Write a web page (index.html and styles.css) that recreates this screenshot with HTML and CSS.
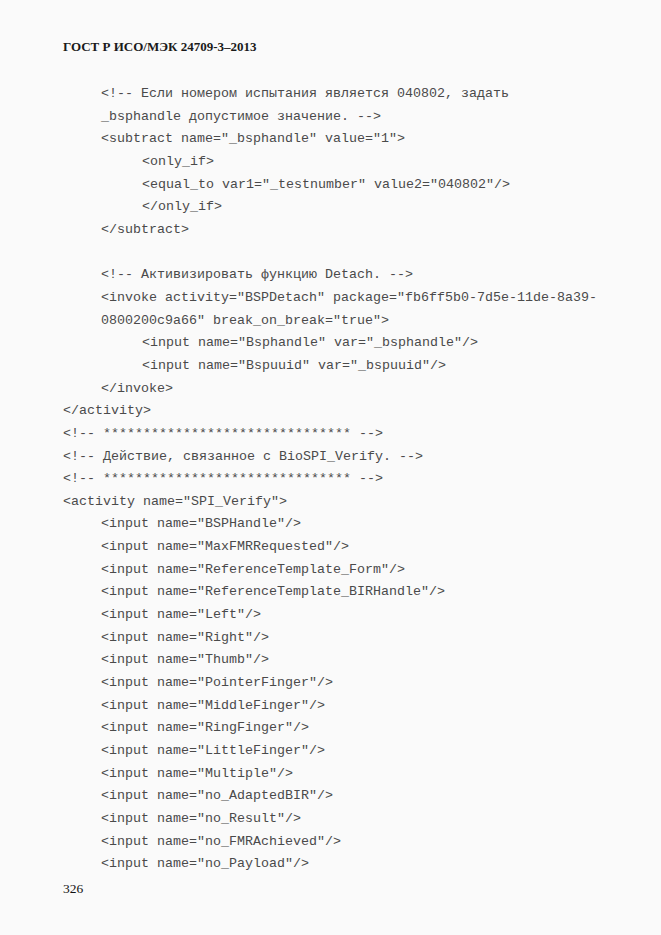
FILE: index.html
```html
<!DOCTYPE html>
<html lang="ru">
<head>
<meta charset="utf-8">
<title>ГОСТ Р ИСО/МЭК 24709-3–2013</title>
<link rel="stylesheet" href="styles.css">
</head>
<body>
<div class="page">
  <div class="header">ГОСТ Р ИСО/МЭК 24709-3–2013</div>
  <div class="code">
    <div class="l1">&lt;!-- Если номером испытания является 040802, задать</div>
    <div class="l1">_bsphandle допустимое значение. --&gt;</div>
    <div class="l1">&lt;subtract name="_bsphandle" value="1"&gt;</div>
    <div class="l2">&lt;only_if&gt;</div>
    <div class="l2">&lt;equal_to var1="_testnumber" value2="040802"/&gt;</div>
    <div class="l2">&lt;/only_if&gt;</div>
    <div class="l1">&lt;/subtract&gt;</div>
    <div class="blank">&nbsp;</div>
    <div class="l1">&lt;!-- Активизировать функцию Detach. --&gt;</div>
    <div class="l1">&lt;invoke activity="BSPDetach" package="fb6ff5b0-7d5e-11de-8a39-</div>
    <div class="l1">0800200c9a66" break_on_break="true"&gt;</div>
    <div class="l2">&lt;input name="Bsphandle" var="_bsphandle"/&gt;</div>
    <div class="l2">&lt;input name="Bspuuid" var="_bspuuid"/&gt;</div>
    <div class="l1">&lt;/invoke&gt;</div>
    <div class="l0">&lt;/activity&gt;</div>
    <div class="l0">&lt;!-- ******************************* --&gt;</div>
    <div class="l0">&lt;!-- Действие, связанное с BioSPI_Verify. --&gt;</div>
    <div class="l0">&lt;!-- ******************************* --&gt;</div>
    <div class="l0">&lt;activity name="SPI_Verify"&gt;</div>
    <div class="l1">&lt;input name="BSPHandle"/&gt;</div>
    <div class="l1">&lt;input name="MaxFMRRequested"/&gt;</div>
    <div class="l1">&lt;input name="ReferenceTemplate_Form"/&gt;</div>
    <div class="l1">&lt;input name="ReferenceTemplate_BIRHandle"/&gt;</div>
    <div class="l1">&lt;input name="Left"/&gt;</div>
    <div class="l1">&lt;input name="Right"/&gt;</div>
    <div class="l1">&lt;input name="Thumb"/&gt;</div>
    <div class="l1">&lt;input name="PointerFinger"/&gt;</div>
    <div class="l1">&lt;input name="MiddleFinger"/&gt;</div>
    <div class="l1">&lt;input name="RingFinger"/&gt;</div>
    <div class="l1">&lt;input name="LittleFinger"/&gt;</div>
    <div class="l1">&lt;input name="Multiple"/&gt;</div>
    <div class="l1">&lt;input name="no_AdaptedBIR"/&gt;</div>
    <div class="l1">&lt;input name="no_Result"/&gt;</div>
    <div class="l1">&lt;input name="no_FMRAchieved"/&gt;</div>
    <div class="l1">&lt;input name="no_Payload"/&gt;</div>
  </div>
  <div class="pagenum">326</div>
</div>
</body>
</html>
```
FILE: styles.css
```css
html, body {
  margin: 0;
  padding: 0;
  background: #fafafa;
}
.page {
  padding: 37px 0 0 63px;
  box-sizing: border-box;
  width: 661px;
  height: 935px;
  overflow: hidden;
}
.header {
  font-family: "Liberation Serif", "Times New Roman", serif;
  font-weight: bold;
  font-size: 13px;
  line-height: 20px;
  color: #1a1a1a;
}
.code {
  margin-top: 26px;
  font-family: "Liberation Mono", "Courier New", monospace;
  font-size: 13.33px;
  line-height: 22.65px;
  color: #4a4a4a;
}
.code div {
  white-space: pre;
}
.l0 { padding-left: 0; }
.l1 { padding-left: 38px; }
.l2 { padding-left: 79px; }
.pagenum {
  margin-top: 5px;
  font-family: "Liberation Serif", "Times New Roman", serif;
  font-size: 13.5px;
  line-height: 16px;
  color: #111;
}
```
